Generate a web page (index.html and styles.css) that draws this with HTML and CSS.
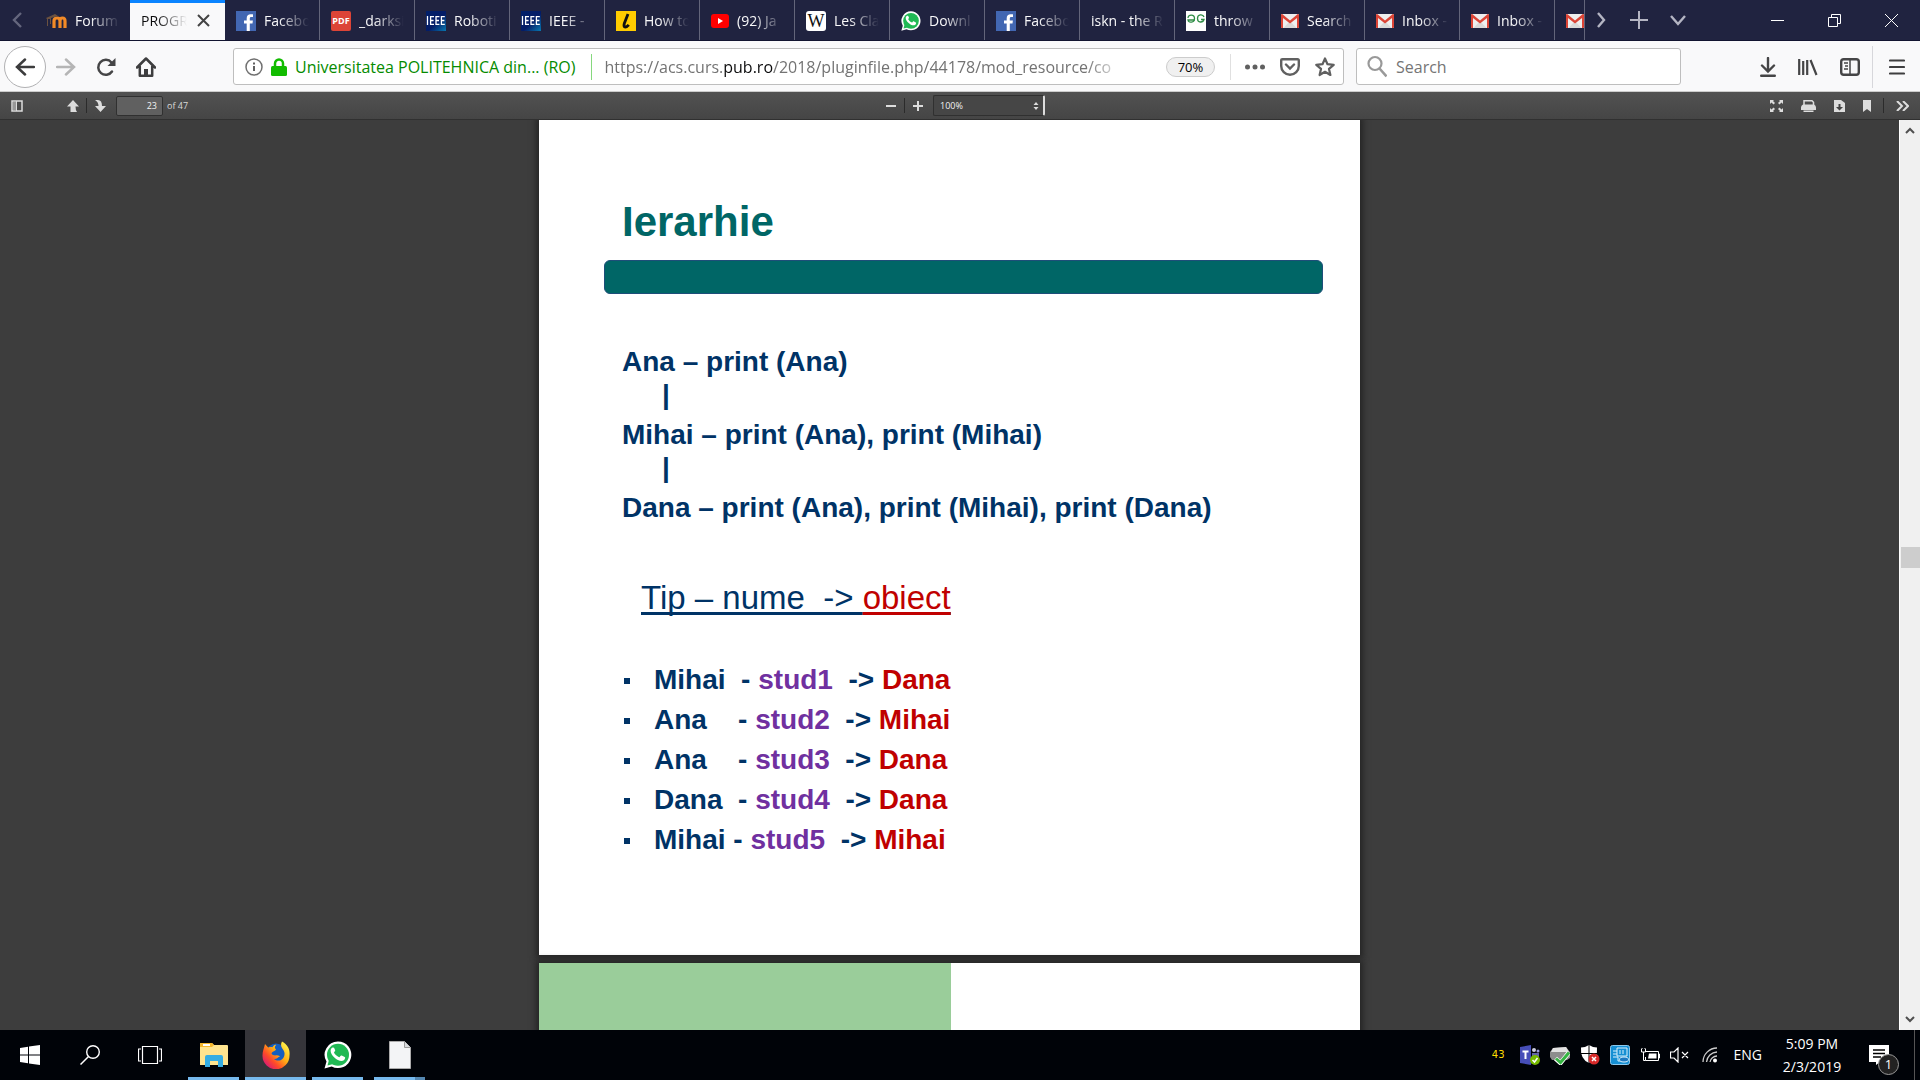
FILE: index.html
```html
<!DOCTYPE html>
<html lang="ro">
<head>
<meta charset="utf-8">
<title>PROGRAMARE - Ierarhie</title>
<meta name="viewport" content="width=device-width, initial-scale=1">
<link rel="stylesheet" href="styles.css">
</head>
<body>
<svg class="defs" aria-hidden="true">
  <symbol id="fb" viewBox="0 0 20 20"><path fill="#4267b2" d="M0 0h20v20H0z"/><path fill="#fff" d="M13.8 20v-7.6h2.7l.4-3h-3.1V7.600c0-.9.3-1.500 1.500-1.500H17V3.400c-.3 0-1.200-.1-2.400-.1-2.300 0-3.900 1.400-3.900 4v2.100H8v3h2.700V20z"/></symbol>
  <symbol id="ieee" viewBox="0 0 20 20"><linearGradient id="ig" x2="1" y2="1"><stop stop-color="#02206a"/><stop offset=".55" stop-color="#041c66"/><stop offset="1" stop-color="#0878b0"/></linearGradient><path fill="url(#ig)" d="M0 0h20v20H0z"/><path stroke="#fff" stroke-width="1.300" fill="none" d="M1.500 5v9M8 5.600H4.600v7.800H8M4.600 9.500h3M13.400 5.600H10v7.800h3.400M10 9.500h3M18.800 5.600h-3.400v7.800h3.400M15.400 9.500h3"/></symbol>
  <symbol id="gmail" viewBox="0 0 18 14"><rect width="18" height="14" rx="1" fill="#eee"/><path fill="#d9d9d9" d="M2.500 14 9 7l6.500 7z"/><path fill="#dc4436" d="M0 1.200C0 .4.500 0 1.200 0L9 6.400 16.800 0c.7 0 1.200.4 1.200 1.200V13c0 .6-.4 1-1 1h-1V4L9 9.400 2 4v10H1c-.6 0-1-.4-1-1z"/></symbol>
  <symbol id="wa" viewBox="0 0 28 28"><path fill="#fff" d="M14 .5a13.300 13.300 0 1 1-6.300 25L.5 27.500l2-6.900A13.300 13.300 0 0 1 14 .5z"/><circle cx="14" cy="13.800" r="11" fill="#20b954"/><path fill="#20b954" d="m3.500 24.600 1.600-6 4.300 4.400z"/><path fill="#fff" d="M10.300 7.300c-.5-.9-1-.8-1.500-.8-1 .2-2.200 1.500-2.200 3.200 0 4.200 6.400 10.400 10.900 10.400 1.700 0 3.400-1.200 3.600-3 .1-.8 0-.9-.4-1.100l-3-1.500c-.6-.2-.9-.1-1.500.8-.7 1-.8 1-1.500.6-2.200-1-3.800-2.700-4.600-4.200-.3-.6.900-1.300 1.100-2 .1-.4-.5-1.500-.9-2.400z"/></symbol>
</svg>

<header class="tabbar">
  <button class="scroll-left" aria-label="Scroll tabs left"><svg width="12" height="20" viewBox="0 0 12 20"><path d="m9 3-7 7 7 7" fill="none" stroke="#64667d" stroke-width="2.400"/></svg></button>
  <nav class="tabs" aria-label="Tabs">
    <a class="tab" href="#"><svg width="21" height="14" viewBox="0 0 21 14"><path d="M8 14V7q0-3 3-3t3 3v7M14 7q0-3 2.500-3T19 7v7" fill="none" stroke="#f28a27" stroke-width="3.200"/><path d="M0 4 9 0l3 2-7 2v6H4V5H2v7H1V5z" fill="#6b5140"/></svg><span class="label">Forum</span></a>
    <div class="tab active"><span class="label">PROGR</span><button class="tab-close" aria-label="Close tab"><svg width="13" height="13" viewBox="0 0 13 13"><path d="m1 1 11 11M12 1 1 12" stroke="#444" stroke-width="2"/></svg></button></div>
    <a class="tab" href="#"><svg width="20" height="20"><use href="#fb"/></svg><span class="label">Facebo</span></a>
    <a class="tab" href="#"><span class="pdf-icon">PDF</span><span class="label">_darksi</span></a>
    <a class="tab" href="#"><svg width="20" height="20"><use href="#ieee"/></svg><span class="label">Roboti</span></a>
    <a class="tab" href="#"><svg width="20" height="20"><use href="#ieee"/></svg><span class="label">IEEE -</span></a>
    <a class="tab" href="#"><svg width="20" height="20" viewBox="0 0 20 20"><path fill="#fc0" d="M0 0h20v20H0z"/><path d="M12 3 8.300 12.500q-1 3.500 1 3.500 1.600 0 3.500-2.200" fill="none" stroke="#111" stroke-width="2.800"/></svg><span class="label">How to</span></a>
    <a class="tab" href="#"><svg width="18" height="20" viewBox="0 0 18 20"><rect y="3" width="18" height="14" rx="3" fill="#f00"/><path d="m7 7 5 3-5 3z" fill="#fff"/></svg><span class="label">(92) Ja</span></a>
    <a class="tab" href="#"><span class="wiki-icon">W</span><span class="label">Les Cla</span></a>
    <a class="tab" href="#"><svg width="20" height="20"><use href="#wa"/></svg><span class="label">Downl</span></a>
    <a class="tab" href="#"><svg width="20" height="20"><use href="#fb"/></svg><span class="label">Facebo</span></a>
    <a class="tab" href="#"><span class="label">iskn - the R</span></a>
    <a class="tab" href="#"><svg width="20" height="20" viewBox="0 0 20 20"><path fill="#fff" d="M0 0h20v20H0z"/><path d="M2 7c0-4 6.500-4 6.500.5S2.500 12 2 9h7M18 6c-1-3-6.500-3-6.500 1.500S17 12 18 8.500h-3" fill="none" stroke="#2f8d46" stroke-width="1.300"/></svg><span class="label">throw</span></a>
    <a class="tab" href="#"><svg width="18" height="14"><use href="#gmail"/></svg><span class="label">Search</span></a>
    <a class="tab" href="#"><svg width="18" height="14"><use href="#gmail"/></svg><span class="label">Inbox -</span></a>
    <a class="tab" href="#"><svg width="18" height="14"><use href="#gmail"/></svg><span class="label">Inbox -</span></a>
    <a class="tab" href="#" aria-label="Inbox"><svg width="18" height="14"><use href="#gmail"/></svg></a>
  </nav>
  <div class="tab-tools">
    <button aria-label="Scroll tabs right"><svg width="12" height="20" viewBox="0 0 12 20"><path d="m2 3 6 7-6 7" fill="none" stroke="#b4b5c3" stroke-width="2.400"/></svg></button>
    <button aria-label="New tab"><svg width="18" height="18" viewBox="0 0 18 18"><path d="M9 0v18M0 9h18" stroke="#b4b5c3" stroke-width="2"/></svg></button>
    <button aria-label="List all tabs"><svg width="16" height="16" viewBox="0 0 16 16"><path d="m1 4 7 8 7-8" fill="none" stroke="#b4b5c3" stroke-width="2.400"/></svg></button>
  </div>
  <div class="window-tools">
    <button aria-label="Minimize"><svg width="13" height="13" viewBox="0 0 13 13"><path d="M0 6.500h13" stroke="#fff"/></svg></button>
    <button aria-label="Restore"><svg width="13" height="13" viewBox="0 0 13 13"><path d="M.5 3.500h9v9h-9zM3.500 3V.5h9v9H10" fill="none" stroke="#fff"/></svg></button>
    <button aria-label="Close"><svg width="13" height="13" viewBox="0 0 13 13"><path d="m0 0 13 13M13 0 0 13" stroke="#fff"/></svg></button>
  </div>
</header>

<div class="navbar">
  <button class="back" aria-label="Back"><svg width="20" height="18" viewBox="0 0 20 18"><path d="M19 9H2M10 1.500 2 9l8 7.500" fill="none" stroke="#3c3c3d" stroke-width="2.500" stroke-linecap="round"/></svg></button>
  <button class="nav-btn" aria-label="Forward"><svg width="20" height="18" viewBox="0 0 20 18"><path d="M1 9h17M10 1.500 18 9l-8 7.500" fill="none" stroke="#b5b5b5" stroke-width="2.500" stroke-linecap="round"/></svg></button>
  <button class="nav-btn" aria-label="Reload"><svg width="20" height="20" viewBox="0 0 20 20"><path d="M16 14.500a7.500 7.500 0 1 1-.5-9" fill="none" stroke="#454546" stroke-width="2.500" stroke-linecap="round"/><path d="M19.500 1v8H11.500z" fill="#454546"/></svg></button>
  <button class="nav-btn" aria-label="Home"><svg width="20" height="20" viewBox="0 0 20 20"><path d="m1 10.500 9-9 9 9M3.800 9.500V18.700h12.400V9.500" fill="none" stroke="#3e3e3f" stroke-width="2.500" stroke-linejoin="round" stroke-linecap="round"/><path d="M8 12h4v7H8z" fill="#3e3e3f"/></svg></button>
  <div class="urlbar">
    <svg width="18" height="18" viewBox="0 0 18 18"><circle cx="9" cy="9" r="8" fill="none" stroke="#707070" stroke-width="1.500"/><path d="M9 8v5M9 4.500v2" stroke="#606060" stroke-width="2"/></svg>
    <svg class="lock" width="16" height="18" viewBox="0 0 16 18"><path d="M4 9V5.500a4 4 0 0 1 8 0V9" fill="none" stroke="#12bc00" stroke-width="2.500"/><rect y="8" width="16" height="10" rx="1.500" fill="#12bc00"/></svg>
    <span class="identity">Universitatea POLITEHNICA din... (RO)</span>
    <span class="url">https://acs.curs.<b>pub.ro</b>/2018/pluginfile.php/44178/mod_resource/co</span>
    <button class="zoom">70%</button>
    <span class="actions">
      <button aria-label="Page actions"><svg width="20" height="6" viewBox="0 0 20 6"><circle cx="2.500" cy="3" r="2.500"/><circle cx="10" cy="3" r="2.500"/><circle cx="17.500" cy="3" r="2.500"/></svg></button>
      <button aria-label="Save to Pocket"><svg width="20" height="18" viewBox="0 0 20 18"><path d="M2.500 1.200h15q1.300 0 1.300 1.300V8a8.800 8.800 0 0 1-17.600 0V2.500q0-1.300 1.300-1.300zM6 6.500l4 4 4-4" fill="none" stroke="#606060" stroke-width="2.400" stroke-linecap="round"/></svg></button>
      <button aria-label="Bookmark"><svg width="20" height="20" viewBox="0 0 20 20"><path d="m10 1.500 2.500 5.700 6.200.6-4.700 4.100 1.400 6.100-5.400-3.200L4.600 18 6 11.900 1.300 7.800l6.200-.6z" fill="none" stroke="#606060" stroke-width="2.200" stroke-linejoin="round"/></svg></button>
    </span>
  </div>
  <label class="search"><svg width="20" height="24" viewBox="0 0 20 24"><circle cx="8" cy="8.500" r="6.500" fill="none" stroke="#999" stroke-width="2.200"/><path d="m12.500 13.500 7 8" stroke="#999" stroke-width="2.600"/></svg><input type="text" placeholder="Search" aria-label="Search"></label>
  <div class="nav-tools">
    <button aria-label="Downloads"><svg width="16" height="20" viewBox="0 0 16 20"><path d="M8 1v13M2 8.500l6 6 6-6M1.200 18.800h13.600" fill="none" stroke="#454546" stroke-width="2.400" stroke-linecap="round"/></svg></button>
    <button aria-label="Library"><svg width="20" height="18" viewBox="0 0 20 18"><path d="M1.200 1v16M5.200 3v14M9.200 2v15M12.500 2l6 15" fill="none" stroke="#454546" stroke-width="2.200"/></svg></button>
    <button aria-label="Sidebars"><svg width="20" height="18" viewBox="0 0 20 18"><rect x="1.200" y="1.200" width="17.600" height="15.600" rx="2.500" fill="none" stroke="#454546" stroke-width="2.400"/><path d="M10 1v16" stroke="#454546" stroke-width="1.500"/><path d="M4 5h4M5 8h3M4 11h4" stroke="#454546" stroke-width="1.300"/></svg></button>
  </div>
  <button class="menu" aria-label="Menu"><svg width="16" height="16" viewBox="0 0 16 16"><path d="M1 1.500h14M1 8h14M1 14.500h14" stroke="#3e3e3f" stroke-width="2.200" stroke-linecap="round"/></svg></button>
</div>

<div class="pdfbar">
  <div class="pdf-left">
    <button class="side" aria-label="Toggle sidebar"><svg width="12" height="12" viewBox="0 0 12 12"><rect x="1" y="1" width="10" height="10" fill="none" stroke="#ddd" stroke-width="1.500"/><path d="M2 2h3v8H2z" fill="#999"/><path d="M5.500 1v10" stroke="#ddd"/></svg></button>
    <button aria-label="Previous page"><svg width="12" height="12" viewBox="0 0 12 12"><path d="m6 0 6 6.500H8.500Q8.500 10 10 12H3.500V6.500H0z" fill="#ddd"/></svg></button>
    <i class="split"></i>
    <button aria-label="Next page"><svg width="12" height="12" viewBox="0 0 12 12"><path d="M1 0h3q4 0 4 6h4l-5.500 6L1 6h3.500Q4.500 2 1 0z" fill="#ddd"/></svg></button>
    <input class="page-no" type="text" value="23" aria-label="Page">
    <span>of 47</span>
  </div>
  <div class="pdf-mid">
    <button aria-label="Zoom out"><svg width="10" height="10" viewBox="0 0 10 10"><path d="M0 5h10" stroke="#ddd" stroke-width="2"/></svg></button>
    <i class="split"></i>
    <button aria-label="Zoom in"><svg width="10" height="10" viewBox="0 0 10 10"><path d="M0 5h10M5 0v10" stroke="#ddd" stroke-width="2"/></svg></button>
    <span class="scale"><select aria-label="Zoom"><option>100%</option></select><svg width="6" height="8" viewBox="0 0 6 8"><path d="m3 0 2.500 3h-5zM3 8 .5 5h5z" fill="#ddd"/></svg></span>
  </div>
  <div class="pdf-right">
    <button aria-label="Presentation mode"><svg width="13" height="12" viewBox="0 0 13 12"><path d="M0 0h4L3 1l2 2-1.500 1.500-2-2L0 4zM13 0v4l-1.500-1.500-2 2L8 3l2-2-1-1zM0 12V8l1.500 1.500 2-2L5 9l-2 2 1 1zM13 12H9l1-1-2-2 1.500-1.500 2 2L13 8z" fill="#ddd"/></svg></button>
    <button aria-label="Print"><svg width="15" height="12" viewBox="0 0 15 12"><path d="M3 5V.8h8l1.500 1.500V5" fill="none" stroke="#ddd" stroke-width="1.500"/><path d="M2 4.500h11q2 1 2 3V10H0V7.500q0-2 2-3zM2.500 10.500h10V12h-10z" fill="#ddd"/></svg></button>
    <button aria-label="Download"><svg width="11" height="12" viewBox="0 0 11 12"><path d="M0 0h7l4 3v9H0z" fill="#ddd"/><path d="M4.500 4h2v3H9l-3.500 3.500L2 7h2.500z" fill="#444"/></svg></button>
    <button aria-label="Bookmark view"><svg width="8" height="12" viewBox="0 0 8 12"><path d="M0 0h8v12L4 9l-4 3z" fill="#ddd"/></svg></button>
    <i class="split"></i>
    <button aria-label="Tools"><svg width="13" height="10" viewBox="0 0 13 10"><path d="m1 0 5 5-5 5M7 0l5 5-5 5" fill="none" stroke="#ddd" stroke-width="2"/></svg></button>
  </div>
</div>

<main class="viewer">
  <div class="pages">
    <article class="page">
      <h1>Ierarhie</h1>
      <div class="rule"></div>
      <div class="tree">
        <p>Ana – print (Ana)</p>
        <p class="bar">|</p>
        <p>Mihai – print (Ana), print (Mihai)</p>
        <p class="bar">|</p>
        <p>Dana – print (Ana), print (Mihai), print (Dana)</p>
      </div>
      <h2>Tip – nume  -&gt; <span class="object">obiect</span></h2>
      <ul>
        <li>Mihai  - <span class="var">stud1</span>  -&gt; <span class="object">Dana</span></li>
        <li>Ana    - <span class="var">stud2</span>  -&gt; <span class="object">Mihai</span></li>
        <li>Ana    - <span class="var">stud3</span>  -&gt; <span class="object">Dana</span></li>
        <li>Dana  - <span class="var">stud4</span>  -&gt; <span class="object">Dana</span></li>
        <li>Mihai - <span class="var">stud5</span>  -&gt; <span class="object">Mihai</span></li>
      </ul>
    </article>
    <article class="page next"><div class="green"></div></article>
  </div>
  <div class="scrollbar">
    <svg width="10" height="20" viewBox="0 0 10 20"><path d="m1 13 4-4 4 4" fill="none" stroke="#505050" stroke-width="2"/></svg>
    <div class="thumb"></div>
    <svg width="10" height="20" viewBox="0 0 10 20"><path d="m1 7 4 4 4-4" fill="none" stroke="#505050" stroke-width="2"/></svg>
  </div>
</main>

<footer class="taskbar">
  <button aria-label="Start"><svg width="20" height="20" viewBox="0 0 20 20"><path d="m0 3 8-1.200v7.700H0zM9 1.600 20 0v9.500H9zM0 10.500h8v7.700L0 17zM9 10.500h11V20L9 18.400z" fill="#fff"/></svg></button>
  <button aria-label="Search Windows"><svg width="20" height="20" viewBox="0 0 20 20"><circle cx="13" cy="7" r="6.300" fill="none" stroke="#fff" stroke-width="1.400"/><path d="m8.500 11.500-8 8" stroke="#fff" stroke-width="1.500"/></svg></button>
  <button aria-label="Task view"><svg width="24" height="20" viewBox="0 0 24 20"><path d="M4.500 1.500h15v17h-15zM3 4H.5v12H3M21 4h2.500v12H21" fill="none" stroke="#fff" stroke-width="1.200"/></svg></button>
  <button class="app" aria-label="File Explorer"><svg width="28" height="24" viewBox="0 0 28 24"><path d="M0 1q0-1 1-1h11l2 2h13q1 0 1 1v19H0z" fill="#ffe48f"/><path d="M0 1q0-1 1-1h11l2 2-2 2H0z" fill="#f5b82e"/><path d="M3 1h7v2H3z" fill="#fff"/><path d="M5 24V14q0-2 2-2h14q2 0 2 2v10h-5v-6h-8v6z" fill="#35ade3"/></svg></button>
  <button class="app current" aria-label="Firefox"><svg width="28" height="28" viewBox="0 0 28 28"><defs><linearGradient id="ff" x1=".9" y1=".1" x2=".1" y2=".9"><stop stop-color="#fff24a"/><stop offset=".4" stop-color="#ffae15"/><stop offset=".7" stop-color="#ff4b28"/><stop offset="1" stop-color="#d4157d"/></linearGradient></defs><circle cx="14" cy="12" r="9.500" fill="#145ec0"/><path d="M20 .5c7 4 8 9 7.500 14A13.500 13.500 0 0 1 .5 15C.4 10 2 7.500 3 3l3.200 3.500C8 6 9.500 6 10.500 6.200 11.500 4.500 13 3.500 14 4c-1.500 2-1.500 3 0 4.500-1 2-3.500 1.500-4.500 4C11 16 15 13 18 15.500c-2 .5-3 2.700-6 2.500 5 4 11 0 10.500-6C22 8 17 6 20 .5z" fill="url(#ff)"/></svg></button>
  <button class="app" aria-label="WhatsApp"><svg width="28" height="28"><use href="#wa"/></svg></button>
  <button class="app multi" aria-label="Document"><svg width="22" height="28" viewBox="0 0 22 28"><path d="M.5.5h15l6 6v21H.5z" fill="#f3f4f6" stroke="#aaa"/><path d="M15.500.5v6h6" fill="#d8dadd" stroke="#999"/></svg></button>
  <div class="tray">
    <span class="temp">43</span>
    <svg width="20" height="20" viewBox="0 0 20 20"><path d="m0 2 11-2v20L0 18z" fill="#464eb8"/><path d="M2.500 6.500h6M5.500 6.500v7.500" stroke="#fff" stroke-width="2"/><circle cx="14" cy="5" r="2" fill="#ccd"/><circle cx="18" cy="6" r="1.500" fill="#99d"/><path d="M12 8h7v5h-7z" fill="#6264a7"/><circle cx="15" cy="15" r="5" fill="#76b900"/><path d="m12.500 15 2 2 3-4" fill="none" stroke="#fff" stroke-width="1.500"/></svg>
    <svg width="20" height="20" viewBox="0 0 20 20"><path d="m3 3 13-1 4 5v6l-3 2H2l-2-3V7z" fill="#8d8d8d"/><path d="m3 3 13-1 3 5H1z" fill="#e2e2e2"/><path d="m5.500 13.500 5 4.500L19 7.500" fill="none" stroke="#fff" stroke-width="4.500"/><path d="m6 13.500 4.500 4L19 7.500" fill="none" stroke="#35b542" stroke-width="3"/></svg>
    <svg width="20" height="20" viewBox="0 0 20 20"><path d="M9 0q4 2.500 8 2.500Q18 14 9 18 0 14 1 2.500 5 2.500 9 0z" fill="#fff"/><path d="M9 0v18M1 8.500h16" stroke="#000"/><circle cx="14" cy="14" r="5.500" fill="#d82a2a"/><path d="m12 12 4 4m0-4-4 4" stroke="#fff" stroke-width="1.500"/></svg>
    <svg width="20" height="20" viewBox="0 0 20 20"><rect x=".5" y=".5" width="19" height="19" rx="2" fill="#168fd3" stroke="#8dc9ec"/><path d="M7 3h10v8H7zM3 6h4M3 9h4M3 12h5v4h3M10 5v4m3-4v4" fill="none" stroke="#d9f0fc"/><ellipse cx="14" cy="14.500" rx="4.500" ry="2.500" fill="#1c78c0" stroke="#d9f0fc"/></svg>
    <svg width="20" height="14" viewBox="0 0 20 14"><path d="M6 3.500h12.500v9h-13V9M18.500 6h1v4h-1M1.500 1v3h4V1M3.500 4v8.500h2M2 0v1m3-1v1" fill="none" stroke="#fff"/><path d="M9 5.500h7.500v5H8z" fill="#fff"/></svg>
    <svg width="20" height="16" viewBox="0 0 20 16"><path d="M.5 5H4l4-4v14l-4-4H.5zM12 5l6 6m0-6-6 6" fill="none" stroke="#fff" stroke-width="1.200"/></svg>
    <svg width="20" height="16" viewBox="0 0 20 16"><path d="M3 15A14 14 0 0 1 17 1M6.500 15A11 11 0 0 1 17 5M10 15a7 7 0 0 1 7-6" fill="none" stroke="#ccc" stroke-width="1.300"/><circle cx="15" cy="13.500" r="2" fill="#fff"/></svg>
    <span class="lang">ENG</span>
    <time class="clock"><span>5:09 PM</span><span>2/3/2019</span></time>
    <button class="notes" aria-label="Notifications"><svg width="20" height="20" viewBox="0 0 20 20"><path d="M0 0h20v17h-9l-4 3v-3H0z" fill="#fff"/><path d="M4 5h12M4 8.500h12M4 12h8" stroke="#000" stroke-width="1.300"/></svg><span class="badge">1</span></button>
  </div>
</footer>
</body>
</html>
```
FILE: styles.css
```css
* { box-sizing: border-box; }
body {
  margin: 0;
  height: 100vh;
  display: flex;
  flex-direction: column;
  overflow: hidden;
  font: 14px/20px "Open Sans", "Noto Sans", sans-serif;
  background: #3d3d3d;
}
button { border: 0; padding: 0; background: none; font: inherit; color: inherit; display: flex; align-items: center; justify-content: center; }
svg { display: block; flex: none; }
.defs { position: absolute; width: 0; height: 0; }

/* Tab strip */
.tabbar { flex: none; height: 41px; display: flex; background: #202340; color: #f9f9fa; border-bottom: 1px solid #121430; }
.scroll-left { width: 35px; }
.tabs { flex: 1; display: flex; overflow: hidden; border-right: 1px solid #63657a; }
.tab { flex: none; width: 95px; height: 41px; padding: 0 8px 0 11px; display: flex; align-items: center; gap: 8px; color: inherit; text-decoration: none; border-right: 1px solid #63657a; }
.tab:first-child { border: 0; }
.tab .label { flex: 1; min-width: 0; overflow: hidden; white-space: nowrap; -webkit-mask-image: linear-gradient(to left, transparent 2px, #000 32px); mask-image: linear-gradient(to left, transparent 2px, #000 32px); }
.tab.active { background: #f9f9fa; color: #0c0c0d; border-top: 3px solid #0a84ff; border-right: 0; padding: 0 15px 3px 11px; }
.pdf-icon { width: 20px; border-radius: 2px; background: #dc4437; color: #fff; font: bold 9px/20px "Open Sans", sans-serif; text-align: center; }
.wiki-icon { width: 20px; border-radius: 3px; background: #fff; color: #111; font: 18px/20px "Liberation Serif", serif; text-align: center; }
.tab-tools { display: flex; width: 116px; padding-left: 11px; gap: 22px; }
.window-tools { display: flex; width: 219px; padding-left: 48px; }
.window-tools button { width: 57px; }

/* Navigation */
.navbar { flex: none; height: 51px; padding-top: 1px; display: flex; align-items: center; background: #f9f9fa; border-bottom: 1px solid #ccc; font-size: 16px; }
.navbar > * { flex: none; }
.back { width: 42px; height: 42px; margin-left: 4px; border: 1px solid #b1b1b3; border-radius: 50%; background: #fff; }
.nav-btn { width: 40px; height: 40px; }
.navbar > .urlbar { flex: 1; min-width: 0; height: 37px; margin-left: 67px; padding-left: 11px; display: flex; align-items: center; background: #fff; border: 1px solid #bebebe; border-radius: 3px; }
.lock { margin: 0 8px; }
.identity { color: #058b00; padding-right: 16px; border-right: 1px solid #86d87e; line-height: 26px; white-space: nowrap; }
.url { flex: 1; min-width: 0; overflow: hidden; margin: 0 40px 0 12px; white-space: nowrap; color: #737373; -webkit-mask-image: linear-gradient(to left, transparent, #000 40px); mask-image: linear-gradient(to left, transparent, #000 40px); }
.url b { font-weight: normal; color: #0c0c0d; }
.zoom { width: 49px; height: 20px; border: 1px solid #ccc; border-radius: 10px; background: #f0f0f0; font-size: 13px; }
.actions { display: flex; align-items: center; gap: 15px; height: 26px; margin-left: 15px; padding: 0 8px 0 14px; border-left: 1px solid #e0e0e0; fill: #606060; }
.search { width: 325px; height: 37px; margin-left: 12px; padding-left: 10px; display: flex; align-items: center; gap: 9px; background: #fff; border: 1px solid #bebebe; border-radius: 3px; }
.search input { flex: 1; min-width: 0; border: 0; outline: 0; padding: 0; background: none; font: inherit; }
.search input::placeholder { color: #757575; opacity: 1; }
.nav-tools { display: flex; gap: 22px; margin-left: 79px; padding-right: 12px; height: 42px; border-right: 1px solid #d7d7db; }
.menu { width: 47px; height: 42px; }

/* PDF toolbar */
.pdfbar { flex: none; height: 28px; display: grid; grid-template-columns: 1fr auto 1fr; align-items: center; background: linear-gradient(#525252, #454545); border-bottom: 1px solid #303030; color: #d9d9d9; font-size: 9px; }
.pdf-left, .pdf-mid, .pdf-right { display: flex; align-items: center; }
.split { width: 1px; height: 15px; background: #2b2b2b; }
.side { margin-right: 44px; }
.pdf-left { padding-left: 11px; }
.pdf-left button { width: 12px; }
.pdf-left .split { margin: 0 7px; }
.page-no { width: 47px; height: 20px; margin: 0 4px 0 10px; padding: 0 5px; border: 1px solid #303030; border-radius: 2px; background: #606060; color: #f2f2f2; font: inherit; text-align: right; }
.pdf-mid { padding-left: 11px; }
.pdf-mid .split { margin: 0 8px; }
.scale { display: flex; align-items: center; width: 112px; height: 21px; margin-left: 10px; padding: 0 4px 0 6px; border: 1px solid #303030; border-right: 2px solid #ddd; border-radius: 2px; background: #464646; }
.scale select { flex: 1; appearance: none; border: 0; outline: 0; padding: 0; background: none; color: #f2f2f2; font: inherit; }
.pdf-right { justify-content: flex-end; gap: 18px; padding-right: 11px; }
.pdf-right .split { margin: 0 -6px; }

/* Document */
.viewer { flex: 1; min-height: 0; display: flex; overflow: hidden; }
.pages { flex: 1; display: flex; flex-direction: column; align-items: center; gap: 8px; overflow: hidden; }
.page { flex: none; width: 821px; background: #fff; box-shadow: 0 0 6px 3px #252525; font-family: "Liberation Sans", Arial, sans-serif; font-size: 28px; font-weight: bold; color: #003366; padding: 78px 37px 95px 65px; }
.page h1 { margin: 0; padding-left: 18px; font-size: 42px; line-height: 48px; color: #006666; }
.rule { height: 34px; margin-top: 14px; background: #006666; border: 1px solid #1e4e79; border-radius: 6px; }
.tree { margin: 49px 0 0 18px; }
.tree p { margin: 0; line-height: 37px; }
.tree .bar { padding: 0 0 6px 40px; line-height: 30px; }
.page h2 { margin: 52px 0 0 37px; font-size: 33px; line-height: 40px; font-weight: normal; white-space: pre; text-decoration: underline; text-decoration-thickness: 3px; text-underline-offset: 3px; text-decoration-skip-ink: none; }
.page h2 .object { text-decoration: inherit; }
.page ul { margin: 42px 0 0 20px; padding: 0; list-style: none; }
.page li { display: block; line-height: 40px; white-space: pre; }
.page li::before { content: ""; display: inline-block; width: 6px; height: 6px; margin: 0 24px 5px 0; background: #003366; }
.object { color: #c00000; }
.var { color: #7030a0; }
.page.next { height: 600px; padding: 0; }
.green { width: 412px; height: 100%; background: #9acd9a; }
.scrollbar { flex: none; width: 21px; display: flex; flex-direction: column; align-items: center; background: #f0f0f0; border-left: 1px solid #fff; }
.thumb { width: 19px; height: 21px; margin: 407px 0 auto; background: #cdcdcd; }

/* Taskbar */
.taskbar { flex: none; height: 50px; display: flex; background: #000308; color: #fff; }
.taskbar > button { width: 60px; }
.taskbar > button:nth-child(3) { margin-right: 5px; }
.taskbar > .app { width: 51px; margin: 0 3px; border-bottom: 3px solid #76b9ed; padding-top: 3px; }
.taskbar > .current { width: 61px; background: #35353a; }
.taskbar > .multi { margin-left: 8px; border-image: linear-gradient(to right, #76b9ed 40px, #5487b0 40px) 1; }
.tray { margin-left: auto; display: flex; align-items: center; gap: 10px; padding-right: 5px; }
.temp { margin-right: 5px; color: #ffdc00; font: 10px/14px "DejaVu Sans", sans-serif; }
.lang { margin-left: 4px; }
.clock { width: 80px; display: flex; flex-direction: column; align-items: center; line-height: 23px; }
.notes { position: relative; width: 46px; height: 50px; border-right: 1px solid #555; margin-left: 7px; justify-content: flex-start; }
.badge { position: absolute; left: 9px; top: 24px; width: 21px; height: 21px; border: 1px solid #999; border-radius: 50%; background: #222; font-size: 13px; line-height: 19px; text-align: center; }
```
